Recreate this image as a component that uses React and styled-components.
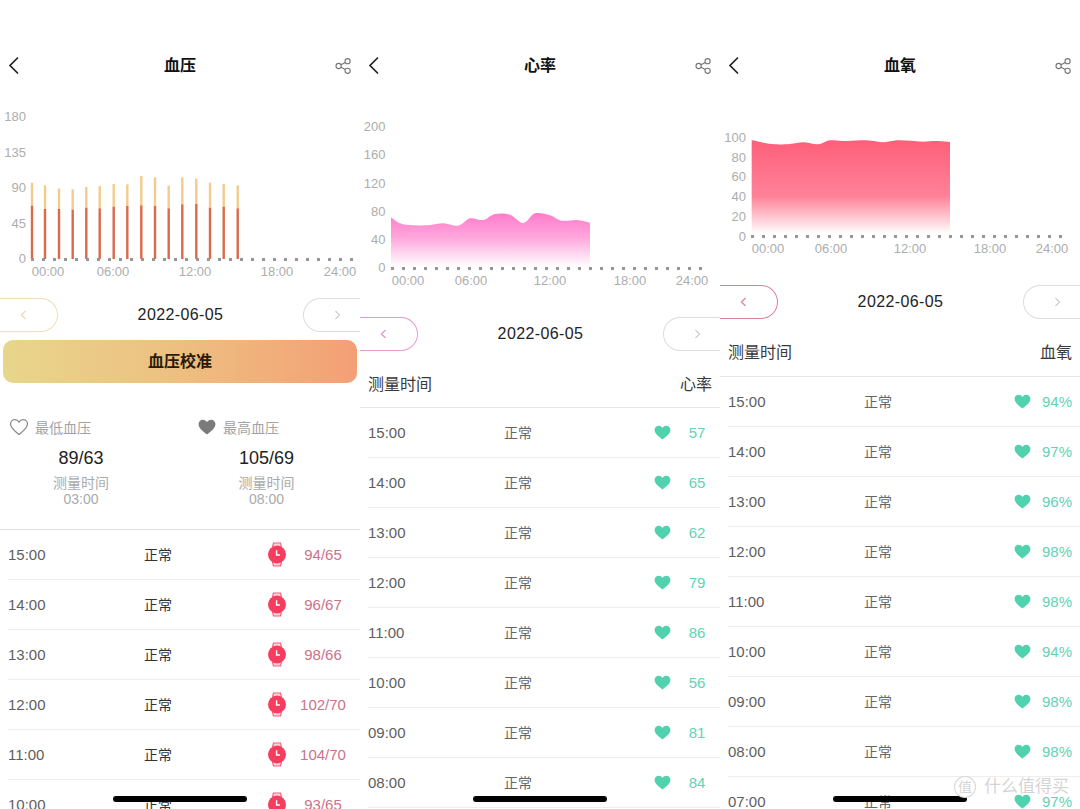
import React from "react";
import styled, { createGlobalStyle } from "styled-components";

const Global = createGlobalStyle`
  html, body { margin: 0; padding: 0; background: #fff; }
  body { font-family: "Liberation Sans", "Noto Sans CJK SC", sans-serif; }
`;

const Page = styled.main`
  display: grid;
  grid-template-columns: repeat(3, 360px);
  width: 1080px;
  height: 809px;
  overflow: hidden;
  background: #fff;
`;

const Panel = styled.section`
  position: relative;
  width: 360px;
  height: 809px;
  overflow: hidden;
`;

const Header = styled.header`
  display: grid;
  grid-template-columns: 60px 1fr 60px;
  align-items: center;
  height: 34px;
  margin-top: 49px;
`;

const BackIcon = styled.svg`
  width: 12px;
  height: 20px;
  margin-left: 8px;
  display: block;
`;

const ShareIcon = styled.svg`
  width: 20px;
  height: 20px;
  justify-self: end;
  margin-right: 7px;
  display: block;
`;

const Title = styled.h1`
  margin: 0;
  text-align: center;
  font-size: 16px;
  line-height: 34px;
  font-weight: 700;
  color: #111;
`;

const ChartSvg = styled.svg`
  display: block;
  width: 360px;
  height: ${(p) => p.$h}px;
`;

const AxisText = styled.text`
  font-size: 13px;
  fill: #adadad;
`;

const DateRow = styled.div`
  display: flex;
  align-items: center;
  justify-content: space-between;
  height: 34px;
`;

const Pill = styled.div`
  box-sizing: border-box;
  height: 34px;
  display: flex;
  align-items: center;
  border: 1px solid ${(p) => p.$color};
  ${(p) =>
    p.$side === "left"
      ? "width: 58px; border-left: none; border-radius: 0 17px 17px 0; justify-content: flex-end; padding-right: 30px;"
      : "width: 57px; border-right: none; border-radius: 17px 0 0 17px; justify-content: flex-start; padding-left: 30px;"}
`;

const Chevron = styled.svg`
  width: 7px;
  height: 10px;
  display: block;
`;

const DateText = styled.div`
  font-size: 16px;
  letter-spacing: 0.4px;
  color: #222;
`;

const Calibrate = styled.button`
  display: block;
  width: 354px;
  height: 43px;
  margin: 8px 3px 0;
  padding: 0 0 3px;
  border: none;
  border-radius: 10px;
  background: linear-gradient(90deg, #e8d68c 0%, #edbf80 50%, #f49f76 100%);
  color: #2a1a0a;
  font: 700 16px "Liberation Sans", "Noto Sans CJK SC", sans-serif;
`;

const Stats = styled.div`
  display: grid;
  grid-template-columns: 188px 1fr;
  height: 147px;
  box-sizing: border-box;
  padding: 35px 0 0 10px;
  border-bottom: 1px solid #dfe3e6;
`;

const Stat = styled.div`
  width: ${(p) => p.$w}px;
  text-align: center;
`;

const StatHead = styled.div`
  display: flex;
  align-items: center;
  gap: 7px;
  height: 18px;
  font-size: 14px;
  white-space: nowrap;
  color: #a3a3a3;
`;

const HeartSvg = styled.svg`
  width: ${(p) => p.$w}px;
  height: ${(p) => p.$hh}px;
  display: block;
`;

const StatValue = styled.div`
  margin-top: 10px;
  font-size: 18px;
  line-height: 24px;
  color: #222;
`;

const StatNote = styled.div`
  margin-top: ${(p) => p.$mt || 0}px;
  font-size: 14px;
  line-height: 16px;
  color: #aaa;
`;

const TableHead = styled.div`
  display: flex;
  justify-content: space-between;
  align-items: center;
  box-sizing: border-box;
  height: ${(p) => p.$h}px;
  padding: ${(p) => p.$pt}px 8px 0;
  font-size: 16px;
  color: #3a3a3a;
`;

const HeadRule = styled.div`
  height: 1px;
  background: #e6e6e6;
`;

const Row = styled.div`
  display: grid;
  grid-template-columns: ${(p) => p.$cols};
  align-items: center;
  box-sizing: border-box;
  height: 50px;
  margin-left: 8px;
  border-bottom: 1px solid #eeeeee;
`;

const Time = styled.div`
  font-size: 15px;
  color: #5e5e5e;
`;

const Status = styled.div`
  text-align: center;
  font-size: 14px;
  padding-bottom: 2px;
  color: ${(p) => p.$color};
`;

const Spacer = styled.div``;

const Value = styled.div`
  text-align: center;
  white-space: nowrap;
  font-size: 15px;
  color: ${(p) => p.$color};
`;

const IconCell = styled.div`
  display: flex;
  justify-content: center;
`;

const HomeBar = styled.div`
  position: absolute;
  left: 113px;
  top: 796px;
  width: 134px;
  height: 6px;
  border-radius: 3px;
  background: #000;
`;

const Watermark = styled.div`
  position: absolute;
  left: 234px;
  top: 775px;
  display: flex;
  align-items: center;
  gap: 8px;
  font-size: 17px;
  line-height: 24px;
  color: rgba(170, 170, 170, 0.5);
`;

const WatermarkBadge = styled.span`
  box-sizing: border-box;
  width: 22px;
  height: 22px;
  display: flex;
  align-items: center;
  justify-content: center;
  border-radius: 50%;
  border: 1px solid rgba(190, 190, 190, 0.6);
  background: #fff;
  font-size: 14px;
`;

const smooth = (pts) => {
  let d = `M${pts[0][0]} ${pts[0][1]}`;
  for (let i = 0; i < pts.length - 1; i++) {
    const p0 = pts[Math.max(i - 1, 0)];
    const p1 = pts[i];
    const p2 = pts[i + 1];
    const p3 = pts[Math.min(i + 2, pts.length - 1)];
    const c1 = [p1[0] + (p2[0] - p0[0]) / 6, p1[1] + (p2[1] - p0[1]) / 6];
    const c2 = [p2[0] - (p3[0] - p1[0]) / 6, p2[1] - (p3[1] - p1[1]) / 6];
    d += ` C${c1[0].toFixed(1)} ${c1[1].toFixed(1)} ${c2[0].toFixed(1)} ${c2[1].toFixed(1)} ${p2[0].toFixed(1)} ${p2[1].toFixed(1)}`;
  }
  return d;
};

const Back = () => (
  <BackIcon viewBox="0 0 12 20">
    <path d="M10 1.5 L2 9.5 L10 17.5" fill="none" stroke="#222" strokeWidth="1.7" />
  </BackIcon>
);

const Share = () => (
  <ShareIcon viewBox="0 0 20 20">
    <g fill="none" stroke="#777" strokeWidth="1.1">
      <circle cx="14.6" cy="5.2" r="2.6" />
      <circle cx="5.6" cy="10" r="2.6" />
      <circle cx="14.6" cy="14.8" r="2.6" />
      <path d="M8 8.8 L12.3 6.5 M8 11.2 L12.3 13.5" />
    </g>
  </ShareIcon>
);

const HEART = "M8 14 C3 10.2 .4 7.8 .4 4.6 C.4 2.2 2.2 .6 4.3 .6 C5.8 .6 7.2 1.4 8 2.8 C8.8 1.4 10.2 .6 11.7 .6 C13.8 .6 15.6 2.2 15.6 4.6 C15.6 7.8 13 10.2 8 14 Z";

const Heart = ({ w = 17, h = 15, fill, stroke }) => (
  <HeartSvg viewBox="0 0 16 14.4" $w={w} $hh={h}>
    <path d={HEART} fill={fill || "none"} stroke={stroke || "none"} strokeWidth={stroke ? 1.1 : 0} />
  </HeartSvg>
);

const Watch = () => (
  <svg width="20" height="25" viewBox="0 0 20 25" style={{ display: "block" }}>
    <path d="M5.5 5 L6.5 1 H13.5 L14.5 5 M5.5 20 L6.5 24 H13.5 L14.5 20" fill="#fbd3da" stroke="#f4637f" strokeWidth="1.2" />
    <circle cx="10" cy="12.5" r="9" fill="#f63d5f" />
    <path d="M9.6 8.2 V13 H13" fill="none" stroke="#fff" strokeWidth="1.4" />
  </svg>
);

const Arrow = ({ dir, color }) => (
  <Chevron viewBox="0 0 7 10">
    <path d={dir === "left" ? "M5.5 1 L1.5 5 L5.5 9" : "M1.5 1 L5.5 5 L1.5 9"} fill="none" stroke={color} strokeWidth="1.3" />
  </Chevron>
);

const DatePicker = ({ color, arrow }) => (
  <DateRow>
    <Pill $side="left" $color={color}>
      <Arrow dir="left" color={arrow} />
    </Pill>
    <DateText>2022-06-05</DateText>
    <Pill $side="right" $color="#dcdcdc">
      <Arrow dir="right" color="#cfcfcf" />
    </Pill>
  </DateRow>
);

const Axes = ({ yLabels, yRight, base, xLabels, xY, dots }) => (
  <>
    {yLabels.map(([t, y]) => (
      <AxisText key={t} x={yRight} y={y + 4.5} textAnchor="end">
        {t}
      </AxisText>
    ))}
    {xLabels.map(([t, x]) => (
      <AxisText key={t} x={x} y={xY + 4.5} textAnchor="middle">
        {t}
      </AxisText>
    ))}
    {Array.from({ length: dots }, (_, i) => (
      <rect key={i} x={31 + i * 11} y={base - 1.5} width="3" height="3" fill="#969696" />
    ))}
  </>
);

const barX = [32, 45, 59, 72.7, 86.3, 99.7, 113.7, 127.3, 141.3, 155, 168.7, 182.3, 196.3, 210, 223.7, 237.7];
const barTop = [428, 436, 446, 448, 441, 438, 432, 433, 408, 412, 437, 412, 416, 428, 432, 436];
const barMid = [497, 507, 507, 509, 503, 505, 500, 498, 496, 498, 505, 493, 492, 503, 500, 505];

const PressureChart = () => (
  <ChartSvg $h={215} viewBox="0 83 360 215">
    {barX.map((x, i) => (
      <g key={x}>
        <rect x={x - 1.2} y={40 + barTop[i] / 3} width="2.4" height={(barMid[i] - barTop[i]) / 3} fill="#f3cb8e" />
        <rect x={x - 1.2} y={40 + barMid[i] / 3} width="2.4" height={259 - 40 - barMid[i] / 3} fill="#db6a4b" />
      </g>
    ))}
    <Axes
      yLabels={[["180", 116], ["135", 152], ["90", 187], ["45", 223], ["0", 258]]}
      yRight={26}
      base={259.5}
      xLabels={[["00:00", 48], ["06:00", 113], ["12:00", 195], ["18:00", 277], ["24:00", 340]]}
      xY={271}
      dots={30}
    />
  </ChartSvg>
);

const heartPts = [[93,352],[120,370],[160,376],[210,375],[250,370],[295,377],[330,355],[370,360],[405,342],[450,344],[490,369],[525,340],[570,346],[605,362],[650,360],[690,368]].map(([x, y]) => [x / 3, 100 + y / 3]);

const HeartChart = () => (
  <ChartSvg $h={234} viewBox="0 83 360 234">
    <defs>
      <linearGradient id="hr" x1="0" y1="0" x2="0" y2="1">
        <stop offset="0" stopColor="#ff7cca" />
        <stop offset="0.45" stopColor="#ffa6dc" />
        <stop offset="1" stopColor="#ffffff" />
      </linearGradient>
    </defs>
    <path d={`${smooth(heartPts)} L230 267 L31 267 Z`} fill="url(#hr)" />
    <Axes
      yLabels={[["200", 126], ["160", 154], ["120", 183], ["80", 211], ["40", 239], ["0", 267]]}
      yRight={25.5}
      base={268.5}
      xLabels={[["00:00", 48], ["06:00", 111], ["12:00", 190], ["18:00", 270], ["24:00", 332]]}
      xY={280}
      dots={29}
    />
  </ChartSvg>
);

const oxyPts = [[95,90],[130,98],[165,103],[210,102],[250,97],[295,103],[330,91],[380,93],[440,91],[490,97],[530,91],[570,92],[610,95],[650,93],[690,96]].map(([x, y]) => [x / 3, 110 + y / 3]);

const OxygenChart = () => (
  <ChartSvg $h={202} viewBox="0 83 360 202">
    <defs>
      <linearGradient id="ox" x1="0" y1="0" x2="0" y2="1">
        <stop offset="0" stopColor="#fe5f7a" />
        <stop offset="0.6" stopColor="#ff8298" />
        <stop offset="1" stopColor="#ffffff" />
      </linearGradient>
    </defs>
    <path d={`${smooth(oxyPts)} L230 234 L31.7 234 Z`} fill="url(#ox)" />
    <Axes
      yLabels={[["100", 137], ["80", 157], ["60", 176], ["40", 196], ["20", 216], ["0", 236]]}
      yRight={26}
      base={236.5}
      xLabels={[["00:00", 48], ["06:00", 111], ["12:00", 190], ["18:00", 270], ["24:00", 332]]}
      xY={248}
      dots={29}
    />
  </ChartSvg>
);

const pressureRows = [["15:00","94/65"],["14:00","96/67"],["13:00","98/66"],["12:00","102/70"],["11:00","104/70"],["10:00","93/65"]];
const heartRows = [["15:00","57"],["14:00","65"],["13:00","62"],["12:00","79"],["11:00","86"],["10:00","56"],["09:00","81"],["08:00","84"]];
const oxygenRows = [["15:00","94%"],["14:00","97%"],["13:00","96%"],["12:00","98%"],["11:00","98%"],["10:00","94%"],["09:00","98%"],["08:00","98%"],["07:00","97%"]];

const PRESSURE_COLS = "110px 80px 67px 24px 68px";
const GREEN_COLS = "110px 80px 92px 24px 46px";

const DataRow = ({ time, cols, statusColor, icon, value, valueColor }) => (
  <Row $cols={cols}>
    <Time>{time}</Time>
    <Status $color={statusColor}>正常</Status>
    <Spacer />
    <IconCell>{icon}</IconCell>
    <Value $color={valueColor}>{value}</Value>
  </Row>
);

const GreenRows = ({ rows }) =>
  rows.map(([t, v]) => (
    <DataRow
      key={t}
      time={t}
      cols={GREEN_COLS}
      statusColor="#666"
      icon={<Heart fill="#4fd2ad" />}
      value={v}
      valueColor="#63d3b6"
    />
  ));

export default function App() {
  return (
    <>
      <Global />
      <Page>
        <Panel>
          <Header>
            <Back />
            <Title>血压</Title>
            <Share />
          </Header>
          <PressureChart />
          <DatePicker color="#efdfba" arrow="#f0d8b4" />
          <Calibrate>血压校准</Calibrate>
          <Stats>
            <Stat $w={142}>
              <StatHead>
                <Heart w={18} h={16} stroke="#8a8a8a" />
                最低血压
              </StatHead>
              <StatValue>89/63</StatValue>
              <StatNote $mt={5}>测量时间</StatNote>
              <StatNote>03:00</StatNote>
            </Stat>
            <Stat $w={137}>
              <StatHead>
                <Heart w={18} h={16} fill="#7b7b7b" />
                最高血压
              </StatHead>
              <StatValue>105/69</StatValue>
              <StatNote $mt={5}>测量时间</StatNote>
              <StatNote>08:00</StatNote>
            </Stat>
          </Stats>
          {pressureRows.map(([t, v]) => (
            <DataRow
              key={t}
              time={t}
              cols={PRESSURE_COLS}
              statusColor="#333"
              icon={<Watch />}
              value={v}
              valueColor="#cb7389"
            />
          ))}
          <HomeBar />
        </Panel>

        <Panel>
          <Header>
            <Back />
            <Title>心率</Title>
            <Share />
          </Header>
          <HeartChart />
          <DatePicker color="#e39ad0" arrow="#dc9ac8" />
          <TableHead $h={56} $pt={8}>
            <span>测量时间</span>
            <span>心率</span>
          </TableHead>
          <HeadRule />
          <GreenRows rows={heartRows} />
          <HomeBar />
        </Panel>

        <Panel>
          <Header>
            <Back />
            <Title>血氧</Title>
            <Share />
          </Header>
          <OxygenChart />
          <DatePicker color="#dc7f94" arrow="#d98a9c" />
          <TableHead $h={57} $pt={7}>
            <span>测量时间</span>
            <span>血氧</span>
          </TableHead>
          <HeadRule />
          <GreenRows rows={oxygenRows} />
          <HomeBar />
          <Watermark>
            <WatermarkBadge>值</WatermarkBadge>
            什么值得买
          </Watermark>
        </Panel>
      </Page>
    </>
  );
}
